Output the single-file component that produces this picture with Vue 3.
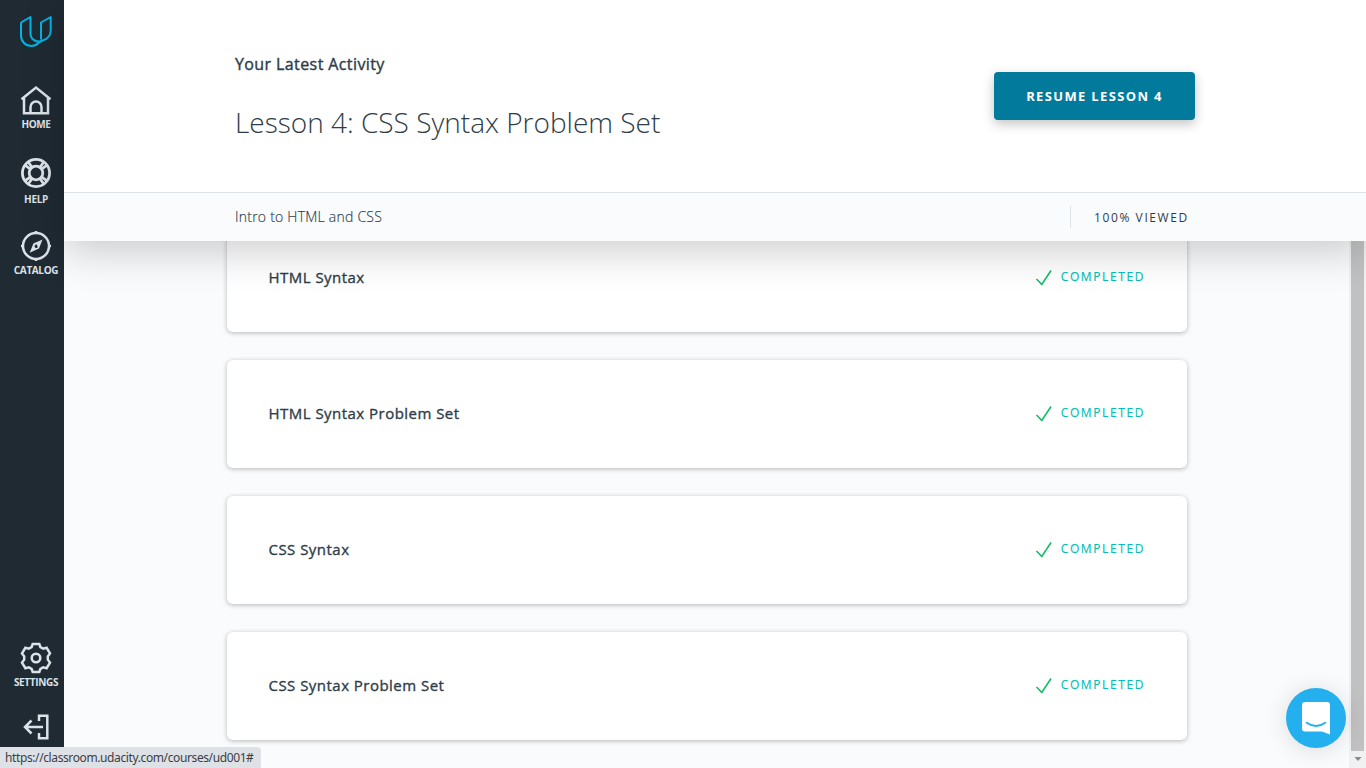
<script setup>
const lessons = ['HTML Syntax', 'HTML Syntax Problem Set', 'CSS Syntax', 'CSS Syntax Problem Set']
</script>

<template>
  <div class="app">
    <nav class="side">
      <svg class="logo" width="32" height="32" viewBox="0 0 32 32">
        <path d="M1 7.500 10.500 2v17c0 4 3.500 6.700 7.500 7.500M1 7.500V20.500c0 6 4.500 10.500 10.500 10.500 3 0 5-1 7-3l4-2.500M21 24.500V7.500L30.700 2v13.500c0 5-3 8.500-8.200 10-6 3-12-1-12-7" />
      </svg>
      <a class="item home">
        <svg width="32" height="30" viewBox="0 0 32 30">
          <path d="M1.500 14.200 16 2.500l14.500 11.700M4 12.500V28.300h24V12.500M10.500 28V22a5.500 5.500 0 0 1 11 0v6" />
        </svg>
        <span>HOME</span>
      </a>
      <a class="item help">
        <svg width="32" height="32" viewBox="0 0 32 32">
          <circle cx="16" cy="16" r="13.600" /><circle cx="16" cy="16" r="6.800" />
          <path d="m5.300 8.400 5.500 4M8.400 5.300l4 5.500M26.700 8.400l-5.500 4M23.600 5.300l-4 5.500M5.300 23.600l5.500-4M8.400 26.700l4-5.500M26.700 23.600l-5.500-4M23.600 26.700l-4-5.500" />
        </svg>
        <span>HELP</span>
      </a>
      <a class="item catalog">
        <svg width="32" height="32" viewBox="0 0 32 32">
          <circle cx="16" cy="16" r="13" />
          <path d="M16 1v3M16 28v3M1 16h3M28 16h3" />
          <path class="solid" fill-rule="evenodd" d="M22.500 9.500 19 18.500l-9.300 4.200 3.700-9.200ZM17 14.800a1.700 1.700 0 1 0 .7 2.500Z" />
        </svg>
        <span>CATALOG</span>
      </a>
      <a class="item settings">
        <svg width="32" height="32" viewBox="0 0 32 32">
          <path d="M12.700 2h6.600l1.100 3.200 2.800 1.500 3.400-.9 3.400 5.600-2.200 2.900v3.400l2.200 2.900-3.400 5.600-3.400-.9-2.800 1.500-1.100 3.200h-6.600l-1.100-3.200-2.800-1.500-3.400.9L2 20.600l2.200-2.900v-3.400L2 11.400l3.400-5.600 3.400.9 2.800-1.500Z" />
          <circle cx="16" cy="16" r="4.300" />
        </svg>
        <span>SETTINGS</span>
      </a>
      <a class="item exit">
        <svg width="28" height="28" viewBox="0 0 28 28">
          <path d="M17 8V2.700h8.300v22.600H17V20M2.500 14h18.500M9.500 7.500 3 14l6.500 6.500" />
        </svg>
      </a>
    </nav>

    <div class="page">
      <header>
        <div class="hero">
          <div>
            <h2>Your Latest Activity</h2>
            <h1>Lesson 4: CSS Syntax Problem Set</h1>
          </div>
          <button>RESUME LESSON 4</button>
        </div>
        <div class="sub">
          <span class="course">Intro to HTML and CSS</span>
          <span class="viewed">100% VIEWED</span>
        </div>
      </header>
      <main>
        <section class="cards">
          <article v-for="l in lessons" :key="l">
            <h3>{{ l }}</h3>
            <div class="done">
              <svg width="18" height="18" viewBox="0 0 18 18"><path d="m1.500 10 5.300 5.500L16 1.500" /></svg>
              <span>COMPLETED</span>
            </div>
          </article>
        </section>
        <div class="scroll"><i></i><svg width="8" height="4" viewBox="0 0 9 5"><path d="M0 0h9L4.500 5Z" /></svg></div>
      </main>
    </div>

    <div class="chat">
      <svg width="28" height="33" viewBox="0 0 28 33">
        <path class="bubble" d="M3 0h22a3 3 0 0 1 3 3v29.500l-8-3H3a3 3 0 0 1-3-3V3a3 3 0 0 1 3-3Z" />
        <path class="smile" d="M4.700 20.700q9.300 6.500 18.600 0" />
      </svg>
    </div>
    <div class="status">https://classroom.udacity.com/courses/ud001#</div>
  </div>
</template>

<style>
body { margin: 0; overflow: hidden; }
</style>

<style scoped>
* { box-sizing: border-box; }
.app { position: relative; display: flex; width: 1366px; height: 768px; overflow: hidden; background: #fafbfd; font-family: "Open Sans", sans-serif; color: #2e3d49; }
.side { width: 64px; flex: none; height: 768px; background: #1f2a33; padding: 15px 0 0 8px; display: flex; flex-direction: column; align-items: center; }
svg { display: block; flex: none; }
.side svg { fill: none; stroke: #dbe2e8; stroke-width: 2.5; }
.side .help svg { stroke-width: 2.8; }
.side .logo { stroke: #02b3e4; stroke-width: 2; stroke-linejoin: round; }
.item { display: flex; flex-direction: column; align-items: center; width: 56px; }
.item span { font-size: 10px; line-height: 14px; font-weight: 700; letter-spacing: -0.35px; color: #dbe2e8; white-space: nowrap; }
.side .solid { fill: #dbe2e8; stroke: none; }
.home { margin-top: 38px; height: 72px; }
.home span { margin-top: 2px; }
.help { height: 73px; }
.help span { margin-top: 3px; }
.catalog { height: 60px; }
.catalog span { margin-top: 1px; }
.settings { margin-top: 352px; height: 71px; }
.settings span { margin-top: 1px; }
.page { flex: 1; display: flex; flex-direction: column; min-width: 0; }
header { position: relative; z-index: 2; height: 241px; flex: none; background: #fff; box-shadow: 0 10px 40px rgba(0, 0, 0, .2); }
.hero { height: 192px; display: flex; justify-content: space-between; align-items: flex-start; padding: 0 171px; }
h1, h2, h3 { margin: 0; }
h2 { margin-top: 53px; font-size: 16px; line-height: 22px; font-weight: 400; letter-spacing: 0.4px; -webkit-text-stroke: 0.4px #2e3d49; white-space: nowrap; }
h1 { margin-top: 27px; font-size: 28px; line-height: 40px; font-weight: 300; white-space: nowrap; }
button { margin-top: 72px; width: 201px; height: 48px; padding: 0; border: 0; border-radius: 4px; background: #017a9b; color: #fff; font: 700 13px/48px "Open Sans", sans-serif; letter-spacing: 1.35px; box-shadow: 0 4px 12px rgba(0, 0, 0, .24); }
.sub { height: 49px; border-top: 1px solid #dbe2e8; background: #fafbfd; display: flex; justify-content: space-between; align-items: center; padding: 0 176px 0 171px; }
.course { font-size: 14px; line-height: 18px; font-weight: 300; letter-spacing: 0.23px; -webkit-text-stroke: 0.15px #2e3d49; }
.viewed { width: 120px; height: 22px; line-height: 24px; border-left: 1px solid #dbe2e8; padding-left: 23px; font-size: 12px; letter-spacing: 1.6px; white-space: nowrap; }
main { flex: 1; display: flex; justify-content: space-between; min-height: 0; }
.cards { margin: -17px 0 0 163px; width: 960px; display: flex; flex-direction: column; gap: 28px; }
article { height: 108px; flex: none; background: #fff; border-radius: 6px; box-shadow: 0 1px 5px rgba(0, 0, 0, .28); display: flex; justify-content: space-between; align-items: center; padding: 0 42px 0 41.500px; }
h3 { margin-top: -2px; font-size: 15px; line-height: 22px; font-weight: 400; letter-spacing: 0.47px; -webkit-text-stroke: 0.35px #2e3d49; white-space: nowrap; }
.done { display: flex; align-items: center; gap: 8px; color: #02c0b8; font-size: 12px; letter-spacing: 1.6px; }
.done span { margin-top: -4px; -webkit-text-stroke: 0.15px #02c0b8; }
.done svg { fill: none; stroke: #15bd66; stroke-width: 1.6; }
.scroll { width: 17px; background: #f1f1f1; display: flex; flex-direction: column; align-items: center; }
.scroll i { width: 13px; height: 510px; background: #c1c1c1; }
.scroll svg { margin-top: 6px; fill: #8b8b8b; }
.chat { position: absolute; z-index: 3; left: 1286px; top: 688px; width: 60px; height: 60px; border-radius: 50%; background: #24b0ee; box-shadow: 0 2px 24px rgba(0, 0, 0, .13); display: flex; align-items: center; justify-content: center; }
.bubble { fill: #fff; }
.smile { fill: none; stroke: #24b0ee; stroke-width: 2; stroke-linecap: round; }
.status { position: absolute; z-index: 4; left: 0; bottom: 0; height: 21px; width: 261px; padding-left: 5px; background: #dee1e6; border-radius: 0 4px 0 0; font: 12px/21px "Noto Sans", sans-serif; letter-spacing: -0.39px; color: #3c4043; white-space: nowrap; }
</style>
